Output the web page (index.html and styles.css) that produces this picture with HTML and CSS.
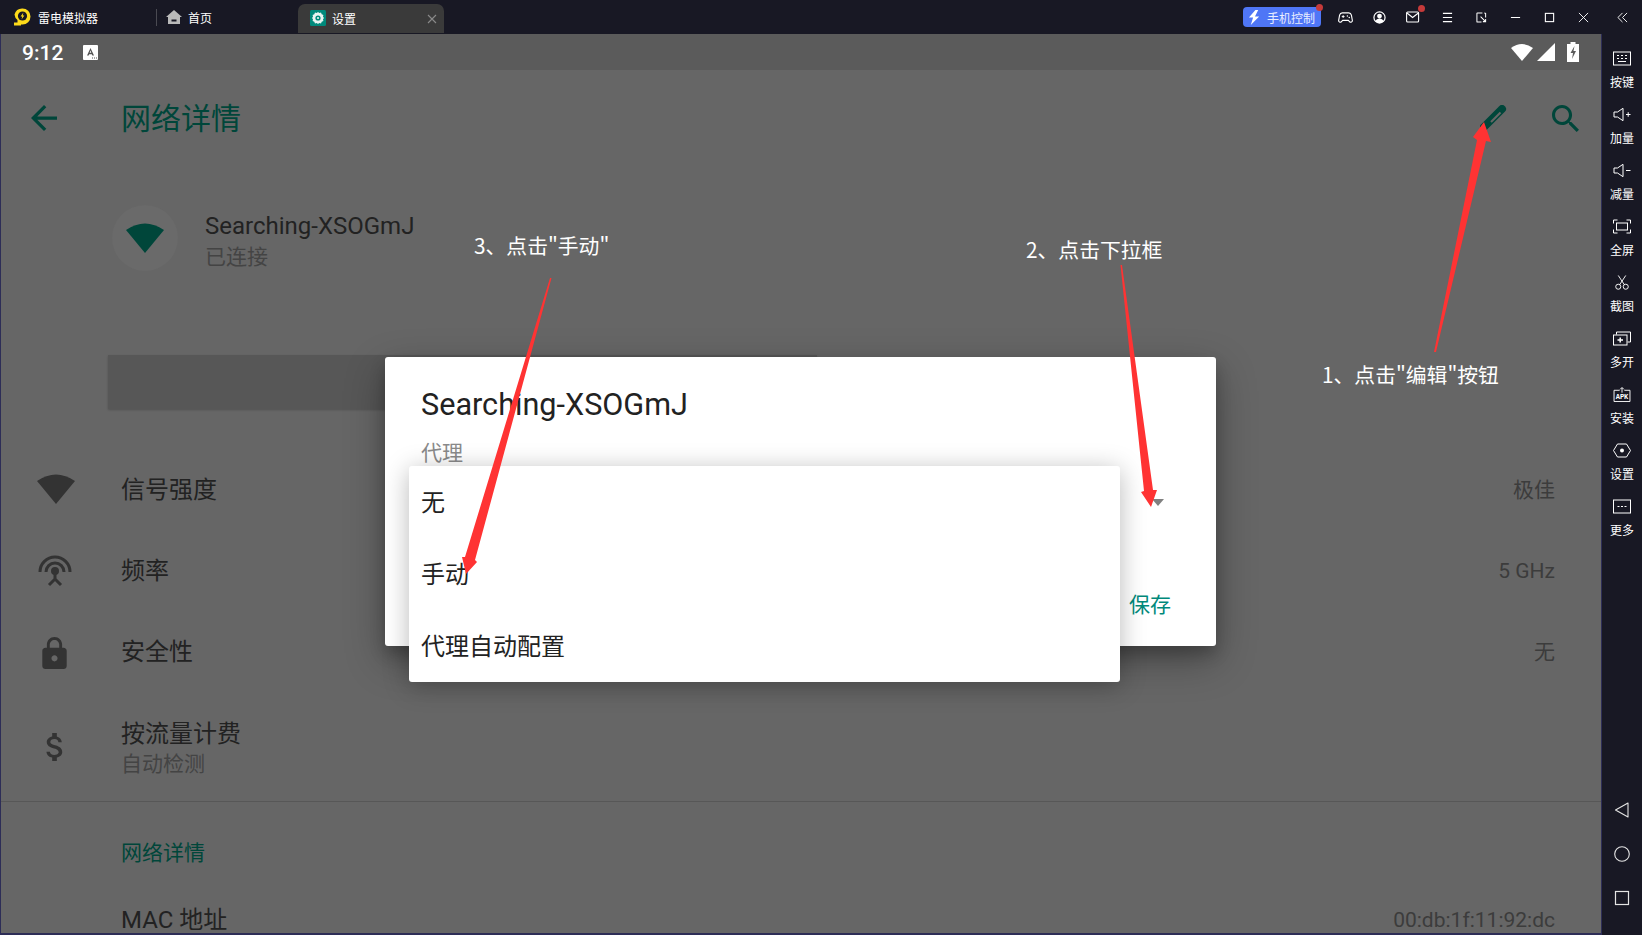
FILE: index.html
```html
<!DOCTYPE html>
<html lang="zh-CN">
<head>
<meta charset="utf-8">
<title>雷电模拟器</title>
<link rel="stylesheet" href="styles.css">
</head>
<body>
<div class="app">
  <header class="titlebar">
    <div class="brand">
      <svg class="brand-logo" viewBox="0 0 18 18"><path d="M9.500 0.500a8 8 0 0 1 0 16H8v1H1v-3h3.500V12a8 8 0 0 1-3-5.500 8 8 0 0 1 8-6z" fill="#fedb1a"/><circle cx="9.500" cy="8" r="4.600" fill="#181824"/><path d="M10.400 4.600 7.600 8.600h1.700l-.8 2.900 2.900-4h-1.700z" fill="#fedb1a"/></svg>
      <span>雷电模拟器</span>
    </div>
    <div class="home-tab">
      <svg class="home-icon" viewBox="0 0 16 14"><path d="M8 0 16 7h-2v7H2V7H0z" fill="#b9b9b9"/><rect x="5.500" y="9.500" width="5" height="2" fill="#181824"/></svg>
      <span>首页</span>
    </div>
    <div class="active-tab">
      <svg class="tab-gear" viewBox="0 0 16 16"><rect width="16" height="16" rx="1.500" fill="#00897b"/><path d="M8 2l1.300 1 1.700-.4.700 1.700 1.700.7-.4 1.700L14 8l-1 1.300.4 1.700-1.700.7-.7 1.700-1.700-.4L8 14l-1.300-1-1.700.4-.7-1.700-1.700-.7.4-1.700L2 8l1-1.300L2.600 5l1.700-.7.7-1.700 1.700.4z" fill="#e8f4f2"/><circle cx="8" cy="8" r="2.600" fill="#00897b"/><circle cx="8" cy="8" r="1.100" fill="#e8f4f2"/></svg>
      <span>设置</span>
      <svg class="tab-close" viewBox="0 0 10 10"><path d="M1 1l8 8M9 1 1 9" stroke="#8a8a8a" stroke-width="1.100" fill="none"/></svg>
    </div>
    <div class="title-actions">
      <div class="phone-control">
        <svg class="bolt" viewBox="0 0 14 16"><path d="M8 0 1 8h4.500L3 16l9-9H7.500L11 0z" fill="#fff"/></svg>
        <span>手机控制</span>
        <i class="dot dot-phone"></i>
      </div>
      <div class="win-btn"><svg viewBox="0 0 16 16" class="win-icon"><path d="M4.500 3h7c1.600 0 2.400 1 2.800 2.500l1 5.500c.3 1.800-1.800 2.700-3 1.300L11 11H5l-1.300 1.300c-1.200 1.400-3.300.5-3-1.300l1-5.500C2.100 4 2.900 3 4.500 3z" fill="none" stroke="#fff" stroke-width="1.200"/><path d="M4 7h3M5.500 5.500v3" stroke="#fff"/><circle cx="10" cy="6.500" r=".8" fill="#fff"/><circle cx="12" cy="8" r=".8" fill="#fff"/></svg></div>
      <div class="win-btn"><svg viewBox="0 0 14 14" class="win-icon user"><circle cx="7" cy="7" r="6" fill="none" stroke="#fff" stroke-width="1.300"/><circle cx="7" cy="5.500" r="2.600" fill="#fff"/><path d="M2.500 11c1-2 2.500-3 4.500-3s3.500 1 4.500 3c-2 2.500-7 2.500-9 0z" fill="#fff"/></svg></div>
      <div class="win-btn"><svg viewBox="0 0 14 12" class="win-icon mail"><rect x=".6" y="1" width="12" height="10" rx="1" fill="none" stroke="#fff" stroke-width="1.100"/><path d="M1 2l5.600 4.500L12.400 2" fill="none" stroke="#fff" stroke-width="1.100"/></svg><i class="dot dot-mail"></i></div>
      <div class="win-btn"><svg viewBox="0 0 12 12" class="win-small"><path d="M1 1.500h10M1 6h10M1 10.500h10" stroke="#fff" stroke-width="1.100"/></svg></div>
      <div class="win-btn"><svg viewBox="0 0 12 12" class="win-small"><path d="M7 1H1.500a.5.500 0 0 0-.5.500v9a.5.500 0 0 0 .5.500H6M10.500 6V1.500L9 1" fill="none" stroke="#fff" stroke-width="1.100"/><path d="M5 5l5.500 5.500M10.500 7.500v3h-3" fill="none" stroke="#fff" stroke-width="1.100"/></svg></div>
      <div class="win-btn"><svg viewBox="0 0 12 12" class="win-small"><path d="M1 6h10" stroke="#fff" stroke-width="1.100"/></svg></div>
      <div class="win-btn"><svg viewBox="0 0 12 12" class="win-small"><rect x="1.500" y="1.500" width="9" height="9" fill="none" stroke="#fff" stroke-width="1.200"/></svg></div>
      <div class="win-btn"><svg viewBox="0 0 12 12" class="win-small"><path d="M1 1l10 10M11 1 1 11" stroke="#fff" stroke-width="1"/></svg></div>
      <div class="win-btn win-collapse"><svg viewBox="0 0 12 12" class="win-small"><path d="M6 1 1 6l5 5M11 1 6 6l5 5" fill="none" stroke="#fff" stroke-width="1"/></svg></div>
    </div>
  </header>

  <div class="workspace">
    <main class="android">
      <div class="statusbar">
        <span class="clock">9:12</span>
        <svg class="keyboard-badge" viewBox="0 0 15 15"><rect width="15" height="15" rx="1" fill="#fff"/><path d="M4 10.500 7.500 3l3.500 7.500H9.300L8.800 9.200H6.200L5.700 10.500zM6.700 7.800h1.600L7.500 5.600z" fill="#555"/><path d="M9 13h1M11 13h1M13 13h1" stroke="#555"/></svg>
        <div class="status-icons">
          <svg class="st-wifi" viewBox="0 0 22 18"><path d="M11 18 0 5Q11-3 22 5z" fill="#fff"/></svg>
          <svg class="st-signal" viewBox="0 0 18 18"><path d="M18 0v18H0z" fill="#fff"/></svg>
          <svg class="st-battery" viewBox="0 0 12 20"><path d="M3.500 0h5v2H12v18H0V2h3.500z" fill="#fff"/><path d="M7.500 4 3.500 11H6l-1 6 4-8H6.500z" fill="#5b5b5b"/></svg>
        </div>
      </div>

      <div class="toolbar">
        <svg class="tool-back" viewBox="4 4 16 16"><path d="M20 11H7.830l5.590-5.590L12 4l-8 8 8 8 1.410-1.410L7.830 13H20v-2z"/></svg>
        <h1 class="tool-title">网络详情</h1>
        <svg class="tool-edit" viewBox="0 0 28 26"><path d="M4 22 22 4" stroke="#00463a" stroke-width="8" stroke-linecap="round" fill="none"/><path d="M20.500 7.500 11 17" stroke="#666" stroke-width="2.200" fill="none"/></svg>
        <svg class="tool-search" viewBox="3 3 17.500 17.500"><path d="M15.500 14h-.79l-.28-.27C15.410 12.590 16 11.110 16 9.500 16 5.910 13.090 3 9.500 3S3 5.910 3 9.500 5.910 16 9.500 16c1.610 0 3.090-.59 4.230-1.570l.27.280v.79l5 4.990L20.490 19l-4.990-5zm-6 0C7.010 14 5 11.990 5 9.500S7.010 5 9.500 5 14 7.010 14 9.500 11.990 14 9.500 14z"/></svg>
      </div>

      <section class="net-header">
        <div class="net-badge">
          <svg class="net-wifi" viewBox="0 0 38 30"><path d="M19 30 0 7Q19-6 38 7z"/></svg>
        </div>
        <div class="net-text">
          <div class="net-name">Searching-XSOGmJ</div>
          <div class="sub sub-near">已连接</div>
        </div>
      </section>

      <div class="forget-btn"></div>

      <section class="info-list">
        <div class="info-row">
          <div class="info-icon"><svg class="ic-signal" viewBox="0 0 38 30"><path d="M19 30 0 7Q19-6 38 7z"/></svg></div>
          <div class="info-title">信号强度</div>
          <div class="info-value info-value-cjk">极佳</div>
        </div>
        <div class="info-row">
          <div class="info-icon"><svg class="ic-freq" viewBox="0 0 34 32"><path d="M2 17A15 15 0 0 1 32 17" fill="none" stroke="#333" stroke-width="3"/><path d="M8 17A9 9 0 0 1 26 17" fill="none" stroke="#333" stroke-width="3"/><circle cx="17" cy="16" r="4" fill="#333"/><path d="M17 18v6M17 24l-6 6M17 24l6 6" fill="none" stroke="#333" stroke-width="3"/></svg></div>
          <div class="info-title">频率</div>
          <div class="info-value">5 GHz</div>
        </div>
        <div class="info-row">
          <div class="info-icon"><svg class="ic-lock" viewBox="4 1 16 21"><path d="M18 8h-1V6c0-2.760-2.240-5-5-5S7 3.240 7 6v2H6c-1.100 0-2 .9-2 2v10c0 1.100.9 2 2 2h12c1.100 0 2-.9 2-2V10c0-1.100-.9-2-2-2zm-6 9c-1.100 0-2-.9-2-2s.9-2 2-2 2 .9 2 2-.9 2-2 2zm3.100-9H8.900V6c0-1.710 1.390-3.100 3.100-3.100 1.710 0 3.100 1.390 3.100 3.100v2z"/></svg></div>
          <div class="info-title">安全性</div>
          <div class="info-value info-value-cjk">无</div>
        </div>
        <div class="info-row info-row-tall">
          <div class="info-icon"><svg class="ic-dollar" viewBox="6 3 11 18"><path d="M11.800 10.900c-2.270-.59-3-1.200-3-2.150 0-1.090 1.010-1.850 2.700-1.850 1.780 0 2.440.85 2.500 2.100h2.210c-.07-1.720-1.120-3.300-3.210-3.810V3h-3v2.160c-1.940.42-3.500 1.680-3.500 3.610 0 2.310 1.910 3.460 4.700 4.130 2.500.6 3 1.480 3 2.410 0 .69-.49 1.790-2.700 1.790-2.060 0-2.870-.92-2.980-2.100h-2.200c.12 2.190 1.760 3.420 3.680 3.830V21h3v-2.150c1.950-.37 3.500-1.500 3.500-3.550 0-2.840-2.430-3.810-4.700-4.400z"/></svg></div>
          <div>
            <div class="info-title">按流量计费</div>
            <div class="sub sub-tight">自动检测</div>
          </div>
        </div>
      </section>

      <section class="details">
        <h2 class="details-title">网络详情</h2>
        <div class="details-row">
          <div class="info-title">MAC 地址</div>
          <div class="info-value">00:db:1f:11:92:dc</div>
        </div>
      </section>

      <!-- Edit dialog with its proxy dropdown opened over it -->
      <div class="dialog">
        <h3 class="dialog-title">Searching-XSOGmJ</h3>
        <div class="dialog-label">代理</div>
        <div class="dialog-actions"><span class="dialog-save">保存</span></div>
        <i class="select-caret"></i>
        <ul class="dropdown">
          <li>无</li>
          <li>手动</li>
          <li>代理自动配置</li>
        </ul>
      </div>
    </main>

    <aside class="sidebar">
      <div class="side-tools">
        <div class="side-item">
          <svg viewBox="0 0 18 14"><rect x=".5" y=".5" width="17" height="13" fill="none" stroke="#fff"/><path d="M4 4h2M8 4h2M12 4h2M4 7h2M8 7h2M12 7h2M5 10h8" stroke="#fff"/></svg>
          <span>按键</span>
        </div>
        <div class="side-item">
          <svg viewBox="0 0 18 14"><path d="M1 4.500h3.500L10 .8v12.400L4.500 9.500H1z" fill="none" stroke="#fff"/><path d="M13 7h4.500M15.200 4.700v4.600" stroke="#fff"/></svg>
          <span>加量</span>
        </div>
        <div class="side-item">
          <svg viewBox="0 0 18 14"><path d="M1 4.500h3.500L10 .8v12.400L4.500 9.500H1z" fill="none" stroke="#fff"/><path d="M13 7h4.500" stroke="#fff"/></svg>
          <span>减量</span>
        </div>
        <div class="side-item">
          <svg viewBox="0 0 18 14"><path d="M.5 4V.5h4M13.500.5h4V4M17.500 10v3.500h-4M4.500 13.500h-4V10" fill="none" stroke="#fff"/><rect x="3.500" y="3.500" width="11" height="7" fill="none" stroke="#fff"/></svg>
          <span>全屏</span>
        </div>
        <div class="side-item">
          <svg viewBox="0 0 18 16"><circle cx="5" cy="12.500" r="2.700" fill="none" stroke="#fff"/><circle cx="13" cy="12.500" r="2.700" fill="none" stroke="#fff"/><path d="M6.500 10.300 13 .5M11.500 10.300 5 .5" stroke="#fff" fill="none"/></svg>
          <span>截图</span>
        </div>
        <div class="side-item">
          <svg viewBox="0 0 18 14"><rect x=".5" y="3.500" width="13.500" height="10" fill="none" stroke="#fff"/><path d="M3.500 3V.5h14v10H14.500" fill="none" stroke="#fff"/><path d="M4.500 8.500h5.500M7.200 6v5" stroke="#fff" stroke-width="1.500"/></svg>
          <span>多开</span>
        </div>
        <div class="side-item">
          <svg viewBox="0 0 18 16"><path d="M6.500 3.500H.5v12h17v-12h-6" fill="none" stroke="#fff"/><path d="M9 6V1M7 2.500 9 .5l2 2" fill="none" stroke="#fff"/><text x="9" y="13" class="apk-text">APK</text></svg>
          <span>安装</span>
        </div>
        <div class="side-item">
          <svg viewBox="0 0 18 14"><path d="M4.500.5h9L17.500 7l-4 6.500h-9L.5 7z" fill="none" stroke="#fff"/><circle cx="9" cy="7" r="2" fill="#fff"/></svg>
          <span>设置</span>
        </div>
        <div class="side-item">
          <svg viewBox="0 0 18 14"><rect x=".5" y=".5" width="17" height="13" fill="none" stroke="#fff"/><path d="M4.500 7h2M8 7h2M11.500 7h2" stroke="#fff"/></svg>
          <span>更多</span>
        </div>
      </div>
      <div class="side-nav">
        <svg viewBox="0 0 16 16" class="nav-icon"><path d="M14 1v14L1.500 8z" fill="none" stroke="#e4e4e4" stroke-width="1.100" stroke-linejoin="round"/></svg>
        <svg viewBox="0 0 16 16" class="nav-icon"><circle cx="8" cy="8" r="7.300" fill="none" stroke="#e4e4e4" stroke-width="1.100"/></svg>
        <svg viewBox="0 0 16 16" class="nav-icon"><rect x="1.500" y="1.500" width="13" height="13" fill="none" stroke="#e4e4e4" stroke-width="1.200"/></svg>
      </div>
    </aside>
  </div>
</div>

<!-- Annotation layer: numbered steps and the arrows that point at the controls -->
<svg class="arrows" viewBox="0 0 1642 935">
  <path d="M1434 352 1477 140 1473 137 1484 122 1491 142 1486 141 1436 352z"/>
  <path d="M1120.500 265 1122 265 1153 490 1157 490 1151 507 1141 492 1144 491z"/>
  <path d="M550 278 551.500 278 475 560 477 562 466 574 462 557 465 557z"/>
</svg>
<div class="note note-1">1、点击"编辑"按钮</div>
<div class="note note-2">2、点击下拉框</div>
<div class="note note-3">3、点击"手动"</div>
</body>
</html>
```

FILE: styles.css
```css
* { box-sizing: border-box; }

html, body {
  margin: 0;
  height: 100%;
  overflow: hidden;
}

body {
  position: relative;
  font-family: Roboto, "Noto Sans CJK SC", sans-serif;
  background: #181824;
}

.app {
  display: flex;
  flex-direction: column;
  width: 1642px;
  height: 935px;
}

/* Window title bar */
.titlebar {
  position: relative;
  display: flex;
  align-items: center;
  flex: 0 0 34px;
  background: #181824;
  color: #fff;
  font-size: 12px;
  font-family: "Noto Sans CJK SC", sans-serif;
}

.brand {
  display: flex;
  align-items: center;
  gap: 7px;
  width: 156px;
  padding-left: 13px;
}

.brand-logo { width: 18px; height: 18px; }

.home-tab {
  display: flex;
  align-items: center;
  gap: 6px;
  width: 142px;
  height: 17px;
  padding-left: 9px;
  border-left: 1px solid #4a4a52;
}

.home-icon { width: 16px; height: 14px; }

.active-tab {
  position: relative;
  display: flex;
  align-items: center;
  align-self: flex-end;
  gap: 6px;
  width: 146px;
  height: 29px;
  margin-bottom: 1px;
  padding: 0 0 1px 12px;
  border-radius: 7px 7px 0 0;
  background: #3a3a3a;
}

.tab-gear { width: 16px; height: 16px; }

.tab-close {
  position: absolute;
  right: 7px;
  top: 10px;
  width: 10px;
  height: 10px;
}

.title-actions {
  display: flex;
  align-items: center;
  margin-left: auto;
}

.phone-control {
  position: relative;
  display: flex;
  align-items: center;
  gap: 6px;
  width: 78px;
  height: 20px;
  margin-right: 7px;
  padding-left: 5px;
  border-radius: 4px;
  background: #4f76f6;
  color: #e8edff;
}

.bolt { width: 13px; height: 15px; }

.dot {
  position: absolute;
  width: 7px;
  height: 7px;
  border-radius: 50%;
  background: #c53a3a;
}

.dot-phone { right: -2px; top: -3px; }
.dot-mail { right: 5px; top: 5px; }

.win-btn {
  position: relative;
  display: flex;
  align-items: center;
  justify-content: center;
  width: 34px;
  height: 34px;
}

.win-collapse { width: 42px; padding-left: 2px; }

.win-icon { width: 15px; height: 15px; }
.win-icon.user { width: 13px; height: 13px; }
.win-icon.mail { width: 14px; height: 12px; }
.win-small { width: 11px; height: 11px; }

/* Emulator body */
.workspace {
  display: flex;
  flex: 1;
  min-height: 0;
}

.android {
  position: relative;
  flex: 1;
  overflow: hidden;
  border-left: 1px solid #2d2d57;
  border-right: 1px solid #2d2d57;
  border-bottom: 2px solid #2d2d57;
  background: #666;
}

.statusbar {
  display: flex;
  align-items: center;
  height: 36px;
  padding: 0 22px 0 21px;
  background: #5b5b5b;
}

.clock {
  color: #fff;
  font-size: 21px;
  font-weight: 500;
  line-height: 36px;
  padding-top: 1px;
}

.keyboard-badge { width: 15px; height: 15px; margin-left: 20px; }

.status-icons {
  display: flex;
  align-items: center;
  margin-left: auto;
}

.st-wifi { width: 22px; height: 18px; }
.st-signal { width: 18px; height: 18px; margin-left: 4px; }
.st-battery { width: 12px; height: 20px; margin-left: 12px; }

.toolbar {
  display: flex;
  align-items: center;
  height: 96px;
  padding-left: 30px;
  fill: #00463a;
}

.tool-back { width: 26px; height: 26px; }

.tool-title {
  margin: 0 0 4px 64px;
  color: #00463a;
  font-family: "Noto Sans CJK SC", sans-serif;
  font-size: 30px;
  font-weight: 400;
}

.tool-edit { width: 28px; height: 26px; margin-left: auto; }
.tool-search { width: 27px; height: 27px; margin: 0 22px 0 44px; }

.net-header {
  display: flex;
  align-items: center;
  gap: 18px;
  padding: 39px 0 0 111px;
}

.net-badge {
  display: flex;
  align-items: center;
  justify-content: center;
  width: 66px;
  height: 66px;
  border-radius: 50%;
  background: #6a6a6a;
}

.net-wifi { width: 38px; height: 30px; fill: #00463a; }

.net-text { padding: 4px 0 0 9px; }

.net-name {
  color: #222;
  font-size: 24px;
  line-height: 30px;
}

.sub {
  color: #444;
  font-family: "Noto Sans CJK SC", sans-serif;
  font-size: 21px;
  line-height: 30px;
}

.sub-near { margin-top: -1px; }
.sub-tight { margin-top: -4px; }

.forget-btn {
  width: 709px;
  height: 54px;
  margin: 84px 0 0 107px;
  background: #575757;
  box-shadow: 0 1px 2px rgba(0, 0, 0, .2);
}

.info-list { margin-top: 41px; }

.info-row {
  display: flex;
  align-items: center;
  height: 81px;
  padding-right: 46px;
}

.info-row-tall { height: 108px; }

.info-icon {
  display: flex;
  flex: 0 0 120px;
  justify-content: center;
  padding-right: 12px;
  fill: #333;
}

.info-title {
  color: #222;
  font-family: Roboto, "Noto Sans CJK SC", sans-serif;
  font-size: 24px;
  line-height: 33px;
}

.info-value {
  margin: 0 0 2px auto;
  color: #3c3c3c;
  font-size: 21px;
}

.info-value-cjk { margin-bottom: 6px; }

.ic-signal { width: 38px; height: 30px; margin: -4px 0 0 2px; }
.ic-freq { width: 34px; height: 32px; margin-top: -2px; }
.ic-lock { width: 25px; height: 32px; margin-right: 2px; }
.ic-dollar { width: 17px; height: 28px; margin-right: 2px; }

.details {
  padding: 31px 46px 0 120px;
  border-top: 1px solid #575757;
}

.details-title {
  margin: 0;
  color: #00463a;
  font-family: "Noto Sans CJK SC", sans-serif;
  font-size: 21px;
  font-weight: 400;
  line-height: 36px;
}

.details-row {
  display: flex;
  align-items: center;
  margin-top: 35px;
}

/* Dialog and dropdown */
.dialog {
  position: absolute;
  left: 384px;
  top: 323px;
  width: 831px;
  height: 289px;
  padding: 30px 36px 0;
  border-radius: 3px;
  background: #fff;
  box-shadow: 0 14px 40px rgba(0, 0, 0, .32), 0 8px 16px rgba(0, 0, 0, .2);
}

.dialog-title {
  margin: 0;
  color: #222;
  font-size: 30.600px;
  font-weight: 400;
  line-height: 36px;
}

.dialog-label {
  margin-top: 13px;
  color: #8a8a8a;
  font-family: "Noto Sans CJK SC", sans-serif;
  font-size: 21px;
  line-height: 30px;
}

.dialog-actions {
  position: absolute;
  right: 45px;
  bottom: 28px;
}

.dialog-save {
  color: #00897b;
  font-family: "Noto Sans CJK SC", sans-serif;
  font-size: 21px;
}

.select-caret {
  position: absolute;
  left: 767px;
  top: 142px;
  width: 0;
  height: 0;
  border-left: 6px solid transparent;
  border-right: 6px solid transparent;
  border-top: 7px solid #808080;
}

.dropdown {
  position: absolute;
  left: 24px;
  top: 109px;
  width: 711px;
  height: 216px;
  margin: 0;
  padding: 0;
  list-style: none;
  border-radius: 3px;
  background: #fff;
  box-shadow: 0 4px 26px rgba(0, 0, 0, .28);
}

.dropdown li {
  height: 72px;
  padding-left: 12px;
  color: #222;
  font-family: "Noto Sans CJK SC", sans-serif;
  font-size: 24px;
  line-height: 70px;
}

/* Right tool column */
.sidebar {
  display: flex;
  flex: 0 0 40px;
  flex-direction: column;
  align-items: center;
  justify-content: space-between;
  padding: 8px 0 29px;
  background: #181824;
}

.side-item {
  display: flex;
  flex-direction: column;
  align-items: center;
  justify-content: flex-start;
  height: 56px;
  padding-top: 9px;
}

.side-item svg { width: 18px; height: 15px; }

.side-item span {
  margin-top: 9px;
  color: #fff;
  font-family: "Noto Sans CJK SC", sans-serif;
  font-size: 12px;
  line-height: 14px;
}

.apk-text {
  fill: #fff;
  font-family: "Liberation Mono", monospace;
  font-size: 7.500px;
  font-weight: 700;
  text-anchor: middle;
}

.side-nav {
  display: flex;
  flex-direction: column;
  gap: 28px;
}

.nav-icon { display: block; width: 16px; height: 16px; }

/* Annotation layer */
.arrows {
  position: absolute;
  left: 0;
  top: 0;
  width: 1642px;
  height: 935px;
  fill: #ff3333;
  pointer-events: none;
}

.note {
  position: absolute;
  color: #fff;
  font-family: "Noto Sans CJK SC", sans-serif;
  font-size: 20.800px;
  line-height: 28px;
  white-space: nowrap;
}

.note-1 { left: 1322px; top: 360px; }
.note-2 { left: 1026px; top: 235px; }
.note-3 { left: 474px; top: 231px; }
```
